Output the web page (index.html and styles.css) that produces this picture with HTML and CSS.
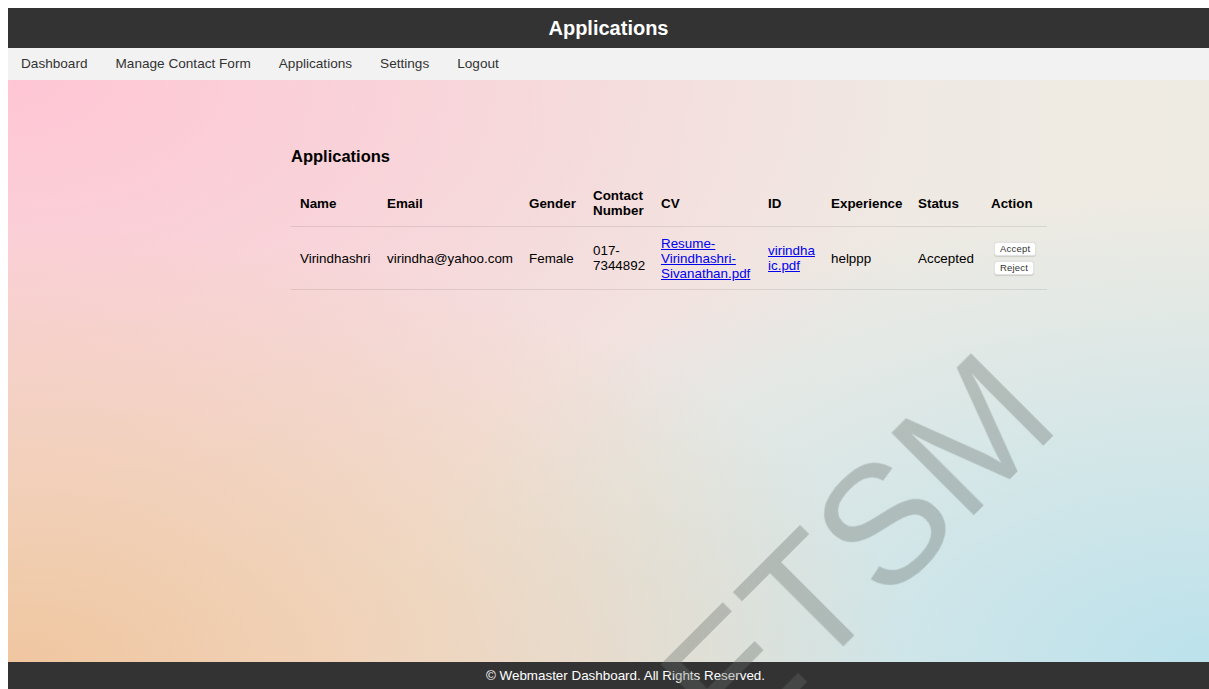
FILE: index.html
```html
<!DOCTYPE html>
<html lang="en">
<head>
<meta charset="utf-8">
<title>Applications</title>
<link rel="stylesheet" href="styles.css">
</head>
<body>
<div class="page">
  <header class="topbar">
    <h1 class="topbar-title">Applications</h1>
  </header>
  <nav class="menu">
    <a href="#" class="menu-link">Dashboard</a>
    <a href="#" class="menu-link">Manage Contact Form</a>
    <a href="#" class="menu-link">Applications</a>
    <a href="#" class="menu-link">Settings</a>
    <a href="#" class="menu-link">Logout</a>
  </nav>
  <main class="main">
    <section class="content">
      <h2 class="section-title">Applications</h2>
      <table class="apps">
        <thead>
          <tr>
            <th class="c-name">Name</th>
            <th class="c-email">Email</th>
            <th class="c-gender">Gender</th>
            <th class="c-contact">Contact Number</th>
            <th class="c-cv">CV</th>
            <th class="c-id">ID</th>
            <th class="c-exp">Experience</th>
            <th class="c-status">Status</th>
            <th class="c-action">Action</th>
          </tr>
        </thead>
        <tbody>
          <tr>
            <td>Virindhashri</td>
            <td>virindha@yahoo.com</td>
            <td>Female</td>
            <td>017-7344892</td>
            <td><a href="#" class="file-link">Resume-Virindhashri-Sivanathan.pdf</a></td>
            <td class="wrap-any"><a href="#" class="file-link">virindhaic.pdf</a></td>
            <td>helppp</td>
            <td>Accepted</td>
            <td>
              <div class="actions">
                <button class="btn" type="button">Accept</button>
                <button class="btn" type="button">Reject</button>
              </div>
            </td>
          </tr>
        </tbody>
      </table>
    </section>
  </main>
  <footer class="footer">© Webmaster Dashboard. All Rights Reserved.</footer>
</div>
<div class="watermark" aria-hidden="true">ETSM</div>
</body>
</html>
```

FILE: styles.css
```css
html, body {
  height: 100%;
}

body {
  margin: 8px 0 0 8px;
  font-family: "Liberation Sans", Arial, Helvetica, sans-serif;
  color: #000;
  background: #fff;
}

.page {
  min-height: calc(100vh - 8px);
  display: flex;
  flex-direction: column;
}

/* dark title bar */
.topbar {
  background: #333;
  height: 40px;
  display: flex;
  align-items: center;
  justify-content: center;
}

.topbar-title {
  margin: 0;
  color: #fff;
  font-size: 20px;
  font-weight: bold;
  line-height: 40px;
}

/* navigation strip */
.menu {
  background: #f2f2f2;
  height: 32px;
  display: flex;
  align-items: center;
}

.menu-link {
  padding: 0 14px;
  font-size: 13.6px;
  line-height: 32px;
  color: #333;
  text-decoration: none;
}

.menu-link:first-child {
  padding-left: 13px;
}

/* pastel backdrop */
.main {
  flex: 1;
  background:
    radial-gradient(75% 75% at 0% 100%, rgba(240, 198, 160, 1) 0%, rgba(240, 198, 160, 0) 100%),
    radial-gradient(70% 80% at 100% 100%, rgba(188, 226, 236, 1) 0%, rgba(188, 226, 236, 0) 100%),
    radial-gradient(80% 90% at 0% 0%, rgba(255, 198, 212, 1) 0%, rgba(255, 198, 212, 0) 100%),
    linear-gradient(90deg, #f1e4df 0%, #efeae3 60%, #eeebe3 100%);
}

.content {
  margin-left: 283px;
  padding-top: 53px;
}

.section-title {
  margin: 14px 0;
  font-size: 16.5px;
  font-weight: bold;
}

/* applications table */
.apps {
  border-collapse: collapse;
  font-size: 13.4px;
}

.apps th,
.apps td {
  padding: 8px 7px;
  text-align: left;
  vertical-align: middle;
  border-bottom: 1px solid rgba(0, 0, 0, 0.09);
}

.apps th:first-child,
.apps td:first-child {
  padding-left: 9px;
}

.apps th {
  font-weight: bold;
}

.apps tbody td {
  padding-top: 8.5px;
  padding-bottom: 8.5px;
}

.c-name { width: 73px; }
.c-email { width: 128px; }
.c-gender { width: 50px; }
.c-contact { width: 54px; }
.c-cv { width: 93px; }
.c-id { width: 49px; }
.c-exp { width: 73px; }
.c-status { width: 59px; }
.c-action { width: 49px; }

.wrap-any {
  overflow-wrap: anywhere;
}

.file-link {
  color: #0000ee;
  text-decoration: underline;
}

.actions {
  display: flex;
  flex-direction: column;
  align-items: flex-start;
  gap: 5px;
  padding-left: 3px;
}

.btn {
  font-family: "Liberation Sans", Arial, sans-serif;
  font-size: 9.5px;
  line-height: 11px;
  letter-spacing: 0.2px;
  padding: 0.5px 5px;
  color: #333;
  background: #fff;
  border: 1px solid #e2e2e2;
  border-radius: 3px;
  box-shadow: 0 0.5px 1px rgba(0, 0, 0, 0.12);
}

.footer {
  background: #333;
  color: #fff;
  font-size: 13.4px;
  text-align: center;
  padding: 6px 0 6px 34px;
  line-height: 15px;
}

/* diagonal overlay label */
.watermark {
  position: fixed;
  left: 733px;
  top: 614px;
  font-family: "Liberation Sans", Arial, sans-serif;
  font-size: 168px;
  line-height: 1;
  color: rgba(100, 108, 102, 0.34);
  white-space: nowrap;
  transform-origin: 0 142px;
  transform: rotate(-45deg);
  pointer-events: none;
}
```
